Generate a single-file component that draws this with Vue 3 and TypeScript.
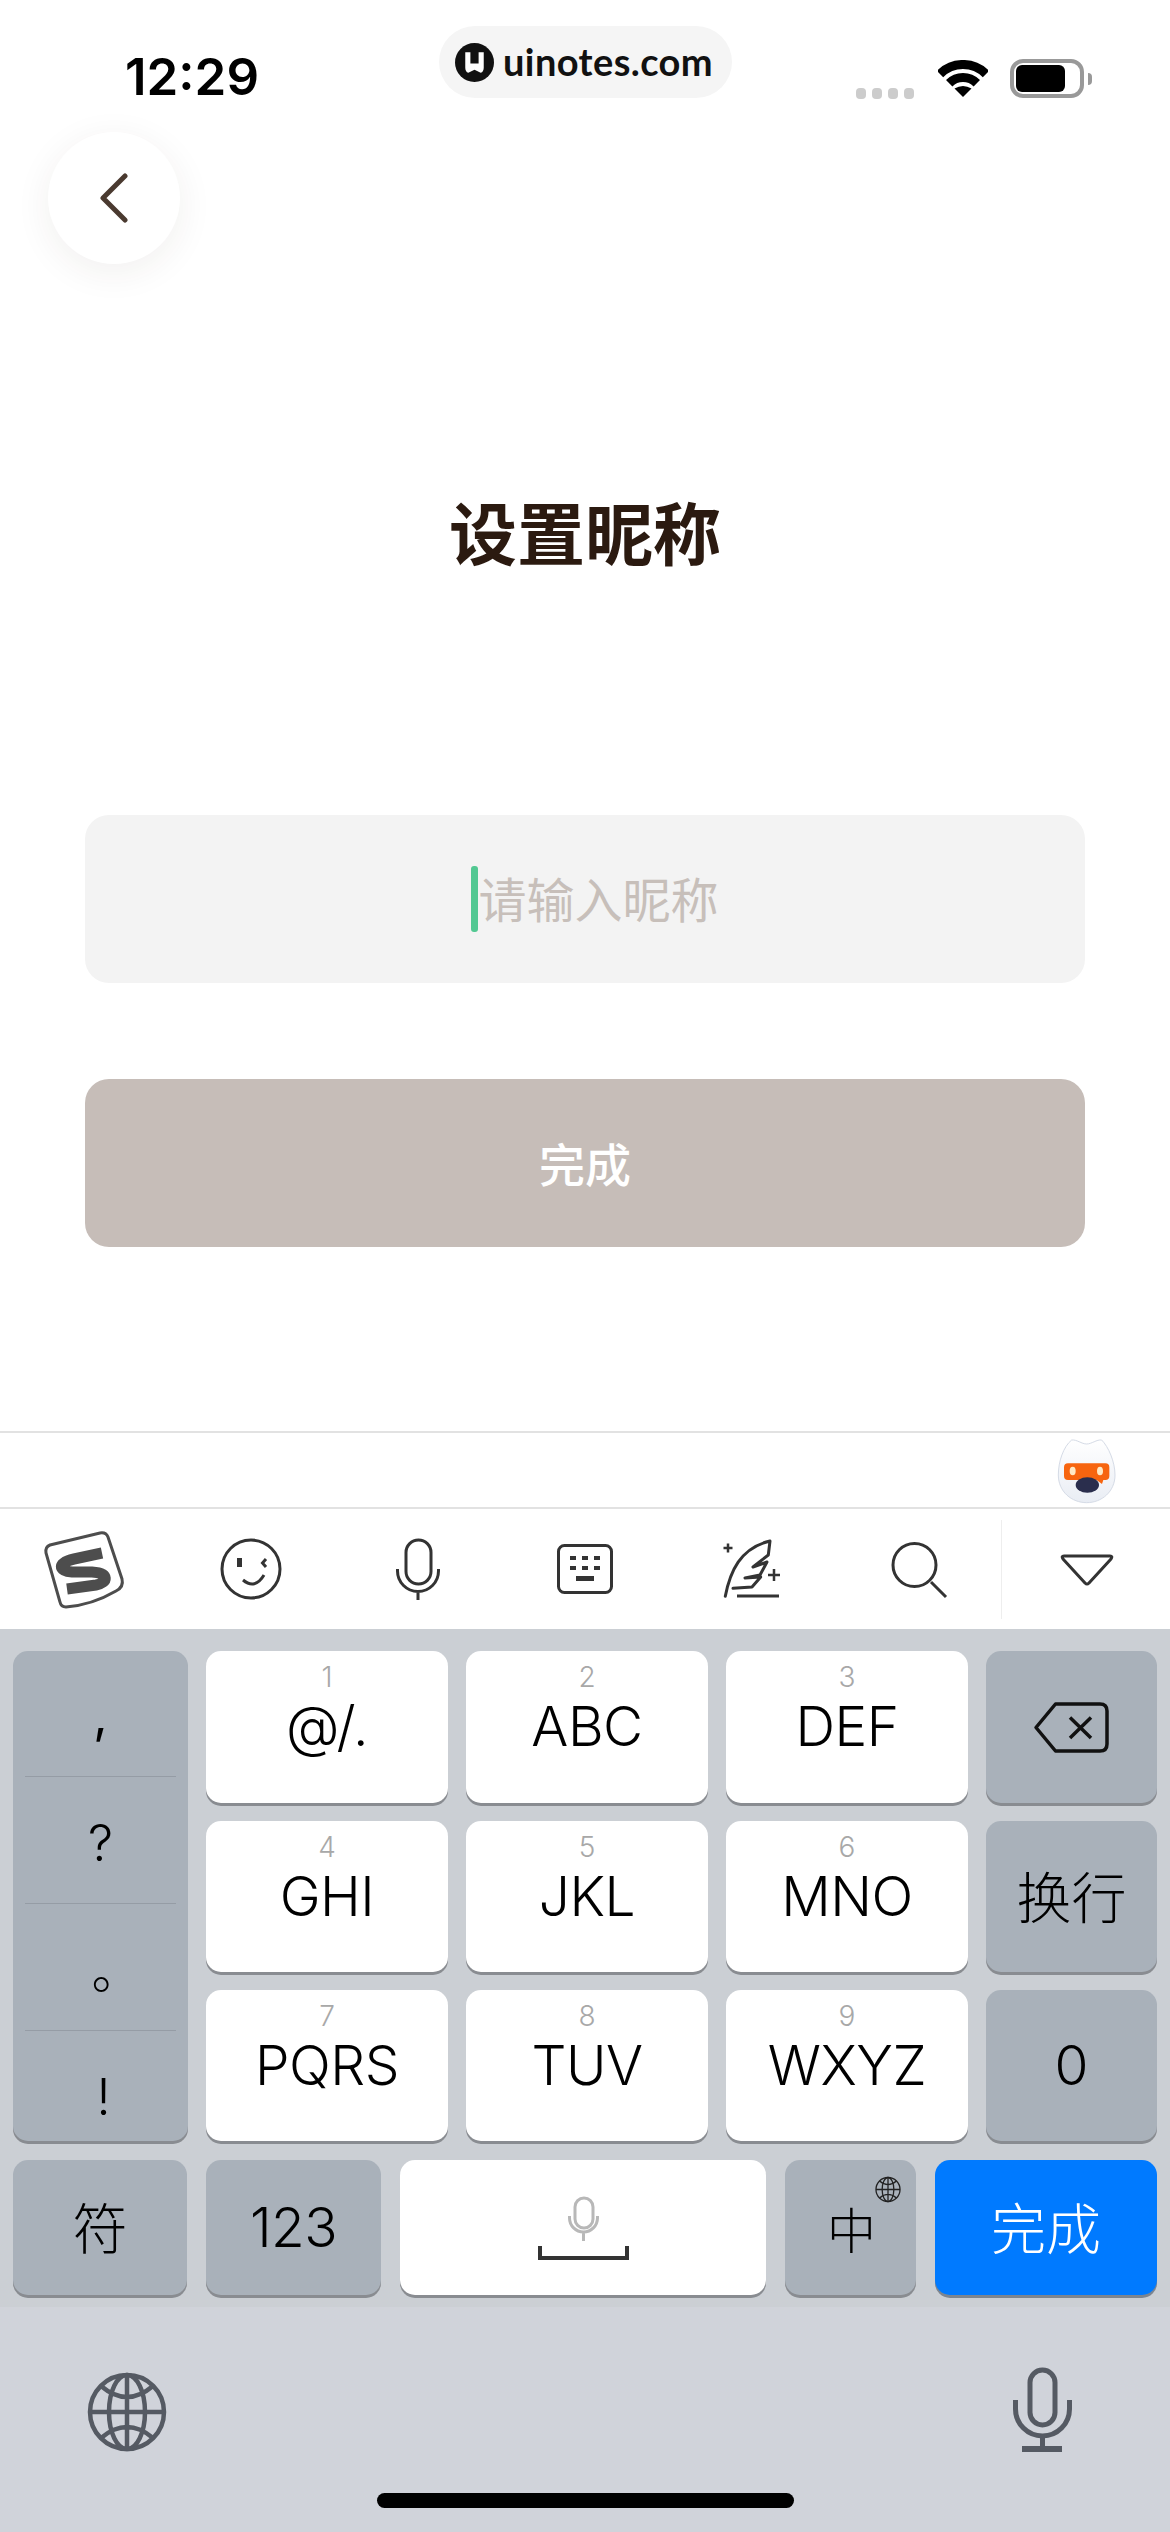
<template>
  <div class="page">
    <section class="main">
      <header class="status">
        <span class="time">12:29</span>
        <div class="pill">
          <svg class="logo" viewBox="0 0 38 38">
            <circle cx="19" cy="19" r="19" fill="#111" />
            <path d="M10 9h5v11h8V9h5v15q0 4-3 5l-6-3-6 3q-3-1-3-5z" fill="#fff" />
          </svg>
          <span class="domain">uinotes.com</span>
        </div>
        <div class="indicators">
          <div class="signal"><i></i><i></i><i></i><i></i></div>
          <svg class="wifi" viewBox="0 0 50 38">
            <g fill="none" stroke="#000" stroke-width="9">
              <path d="M2 14A32.5 32.5 0 0 1 48 14" />
              <path d="M11.2 23.2A19.5 19.5 0 0 1 38.8 23.2" />
            </g>
            <path d="M25 37l-8.5-8.5q8.5-5 17 0z" fill="#000" />
          </svg>
          <div class="battery"><div class="level"></div></div>
          <div class="nub"></div>
        </div>
      </header>

      <button class="back" type="button" aria-label="返回">
        <svg width="28" height="50" viewBox="0 0 28 50">
          <path d="M25 3L3 25l22 22" fill="none" stroke="#4a3a30" stroke-width="5" stroke-linecap="round" stroke-linejoin="round" />
        </svg>
      </button>

      <h1 class="title">设置昵称</h1>

      <div class="field">
        <span class="caret"></span>
        <span class="placeholder">请输入昵称</span>
      </div>
      <button class="submit" type="button">完成</button>
    </section>

    <div class="candidates">
      <svg class="mascot" viewBox="0 0 270 240">
        <defs>
          <linearGradient id="head" x1="0" y1="0" x2="0" y2="1">
            <stop offset="0" stop-color="#ffffff" />
            <stop offset="1" stop-color="#e9edf4" />
          </linearGradient>
        </defs>
        <path d="M140 42C125 42 110 28 95 30C70 50 55 95 55 135C55 185 95 218 140 218C185 218 225 185 225 135C225 95 205 50 185 30C170 28 155 42 140 42Z" fill="url(#head)" stroke="#d5dbe6" stroke-width="3" />
        <path d="M84 100H196Q208 100 208 112V138Q208 150 196 150H190L186 162L170 150H84Q72 150 72 138V112Q72 100 84 100Z" fill="#f7650f" />
        <ellipse cx="98" cy="123" rx="9" ry="13" fill="#ffe9c4" />
        <ellipse cx="180" cy="123" rx="9" ry="13" fill="#ffe9c4" />
        <ellipse cx="142" cy="165" rx="35" ry="23" fill="#2a2e4d" />
      </svg>
    </div>

    <div class="toolbar">
      <svg class="s-logo" viewBox="40 1525 88 87">
        <path d="M50 1544L100 1532Q106 1531 108 1536L122 1578Q124 1586 116 1590Q92 1604 66 1606Q61 1606 60 1601L46 1552Q45 1546 50 1544Z" fill="none" stroke="#4d4d4d" stroke-width="3" />
        <path d="M102 1552L74 1558C57 1562 58 1570 72 1571L92 1571C110 1572 108 1582 96 1584L67 1588" fill="none" stroke="#4d4d4d" stroke-width="11" />
      </svg>
      <svg class="tool smile" viewBox="220 1537 64 64">
        <circle cx="251" cy="1569" r="29" fill="none" stroke="#333" stroke-width="3" />
        <rect x="237" y="1558" width="5" height="9" fill="#333" />
        <path d="M266 1559l-3.500 4 3.500 4M243 1580Q255 1590 264 1575" fill="none" stroke="#333" stroke-width="3" />
      </svg>
      <svg class="tool mic" viewBox="394 1537 48 64">
        <rect x="406" y="1540" width="25" height="44" rx="12.500" fill="none" stroke="#333" stroke-width="3" />
        <path d="M397.500 1569V1571A20.500 20.500 0 0 0 438.500 1571V1569M418 1591V1600" fill="none" stroke="#333" stroke-width="3" />
      </svg>
      <svg class="tool keys-icon" viewBox="555 1542 60 54">
        <rect x="558.500" y="1545.500" width="53" height="47" rx="6" fill="none" stroke="#333" stroke-width="3" />
        <path d="M570 1556h6v4h-6zM582 1556h6v4h-6zM594 1556h6v4h-6zM570 1566h6v4h-6zM582 1566h6v4h-6zM594 1566h6v4h-6zM576 1576h18v5h-18z" fill="#333" />
      </svg>
      <svg class="tool feather" viewBox="720 1539 62 60">
        <path d="M725.300 1596.300C730 1572 740 1548 770 1541L768.300 1555L753 1567L767 1562L760 1575L745 1578L760.700 1577L752 1587L733 1588.300" fill="none" stroke="#333" stroke-width="3" stroke-linejoin="round" stroke-linecap="round" />
        <path d="M737 1596H779" stroke="#333" stroke-width="3" />
        <path d="M728 1543.500V1552.500M723.500 1548H732.500M774 1569V1581M768 1575H780" stroke="#333" stroke-width="2.500" />
      </svg>
      <svg class="tool search" viewBox="890 1539 58 59">
        <circle cx="914.500" cy="1564" r="21.500" fill="none" stroke="#333" stroke-width="3" />
        <path d="M931 1581L946 1596" stroke="#333" stroke-width="3" />
      </svg>
      <div class="tool-divider"></div>
      <svg class="tool collapse" viewBox="1059 1552 56 35">
        <path d="M1064 1556H1110Q1113 1556 1111 1559L1089 1583Q1087 1585 1085 1583L1063 1559Q1061 1556 1064 1556Z" fill="none" stroke="#333" stroke-width="3" stroke-linejoin="round" />
      </svg>
    </div>

    <div class="keyboard">
      <div class="keys">
        <div class="grid">
          <div class="key gray punct">
            <span v-for="p in punctuation" :key="p.text" class="punct-cell" :class="p.cls">{{ p.text }}</span>
          </div>
          <template v-for="row in rows" :key="row.side">
            <div v-for="k in row.keys" :key="k.digit" class="key letter">
              <span class="digit">{{ k.digit }}</span>
              <span class="label">{{ k.label }}</span>
            </div>
            <div class="key gray side">
              <svg v-if="row.side === 'del'" class="del" viewBox="1032 1701 77 53">
                <path d="M1054.500 1704H1099Q1106 1704 1106 1711V1744Q1106 1751 1099 1751H1054.500L1035 1727.500Z" fill="none" stroke="#111" stroke-width="3.500" stroke-linejoin="round" />
                <path d="M1069 1717.500L1090 1738M1090 1717.500L1069 1738" stroke="#111" stroke-width="3.500" />
              </svg>
              <span v-else class="side-text" :class="{ zero: row.side === '0' }">{{ row.side }}</span>
            </div>
          </template>
        </div>

        <div class="bottom-row">
          <div class="key gray sym"><span class="cjk">符</span></div>
          <div class="key gray num"><span class="label">123</span></div>
          <div class="key letter space">
            <svg class="space-icon" viewBox="535 2195 95 67">
              <rect x="574" y="2198" width="18" height="30" rx="9" fill="none" stroke="#b8b8b8" stroke-width="3" />
              <path d="M568.500 2216V2218A14 14 0 0 0 596.500 2218V2216M582.500 2232V2241" fill="none" stroke="#b8b8b8" stroke-width="3" />
              <path d="M539 2246V2258H626V2246" fill="none" stroke="#333" stroke-width="4" />
            </svg>
          </div>
          <div class="key gray lang">
            <span class="cjk zh">中</span>
            <svg class="mini-globe" viewBox="0 0 80 80">
              <g fill="none" stroke="#222" stroke-width="4">
                <circle cx="40" cy="40" r="37" />
                <ellipse cx="40" cy="40" rx="18" ry="37" />
                <path d="M40 3V77M3 40H77M14 14Q40 36 66 14M14 66Q40 44 66 66" />
              </g>
            </svg>
          </div>
          <div class="key done"><span class="cjk">完成</span></div>
        </div>
      </div>

      <div class="dock">
        <svg class="dock-globe" viewBox="0 0 80 80">
          <g fill="none" stroke="#555a63" stroke-width="4.500">
            <circle cx="40" cy="40" r="37" />
            <ellipse cx="40" cy="40" rx="18" ry="37" />
            <path d="M40 3V77M3 40H77M14 14Q40 36 66 14M14 66Q40 44 66 66" />
          </g>
        </svg>
        <svg class="dock-mic" viewBox="1011 2365 61 88">
          <rect x="1030" y="2369" width="25" height="55" rx="12.500" fill="none" stroke="#555a63" stroke-width="5" />
          <path d="M1015.500 2399V2408A27 27 0 0 0 1069.500 2408V2399M1042.500 2436V2446" fill="none" stroke="#555a63" stroke-width="5" />
          <path d="M1022 2445H1062V2451H1022Z" fill="#555a63" />
        </svg>
        <div class="home-bar"></div>
      </div>
    </div>
  </div>
</template>

<script setup lang="ts">
interface LetterKey {
  digit: string
  label: string
}

const punctuation = [
  { text: ',', cls: 'c1' },
  { text: '?', cls: 'c2' },
  { text: '。', cls: 'c3' },
  { text: '!', cls: 'c4' },
]

const rows: { side: string; keys: LetterKey[] }[] = [
  {
    side: 'del',
    keys: [
      { digit: '1', label: '@/.' },
      { digit: '2', label: 'ABC' },
      { digit: '3', label: 'DEF' },
    ],
  },
  {
    side: '换行',
    keys: [
      { digit: '4', label: 'GHI' },
      { digit: '5', label: 'JKL' },
      { digit: '6', label: 'MNO' },
    ],
  },
  {
    side: '0',
    keys: [
      { digit: '7', label: 'PQRS' },
      { digit: '8', label: 'TUV' },
      { digit: '9', label: 'WXYZ' },
    ],
  },
]
</script>

<style>
html,
body {
  margin: 0;
  background: #fff;
}
</style>

<style scoped>
.page {
  width: 1170px;
  height: 2532px;
  display: flex;
  flex-direction: column;
  background: #fff;
  overflow: hidden;
  font-family: Inter, "Noto Sans CJK SC", sans-serif;
}

.main {
  height: 1431px;
  display: flex;
  flex-direction: column;
  flex-shrink: 0;
}

.status {
  height: 98px;
  padding: 26px 0 0 125px;
  box-sizing: border-box;
  display: flex;
  align-items: flex-end;
}
.time {
  width: 314px;
  font-size: 51px;
  line-height: 50px;
  font-weight: 600;
  color: #000;
  margin-bottom: -4px;
}
.pill {
  width: 293px;
  height: 72px;
  border-radius: 36px;
  background: #f5f5f5;
  display: flex;
  align-items: center;
  padding-left: 16px;
  box-sizing: border-box;
  gap: 9px;
  font-family: Lato, sans-serif;
  font-size: 38px;
  font-weight: 700;
  color: #111;
  letter-spacing: 0.4px;
}
.domain {
  margin-top: -2px;
}
.logo {
  width: 39px;
  height: 39px;
  flex-shrink: 0;
}
.indicators {
  margin-left: 124px;
  display: flex;
  align-items: flex-end;
}
.signal {
  display: flex;
  gap: 6px;
  margin-right: 24px;
  margin-bottom: -1px;
}
.signal i {
  width: 10px;
  height: 11px;
  border-radius: 4px;
  background: #ccc;
}
.wifi {
  width: 50px;
  height: 38px;
  margin-right: 22px;
}
.battery {
  width: 74px;
  height: 39px;
  border: 4px solid #999;
  border-radius: 13px;
  box-sizing: border-box;
  padding: 2px;
}
.level {
  width: 49px;
  height: 27px;
  background: #000;
  border-radius: 6px;
}
.nub {
  width: 4px;
  height: 12px;
  margin: 0 0 13px 4px;
  background: #999;
  border-radius: 0 6px 6px 0;
}

.back {
  width: 132px;
  height: 132px;
  margin: 34px 0 0 48px;
  padding: 0;
  border: 0;
  border-radius: 50%;
  background: #fff;
  box-shadow: 0 8px 36px rgba(60, 40, 30, 0.07);
  display: flex;
  align-items: center;
  justify-content: center;
}

.title {
  margin: 233px 0 0;
  height: 68px;
  font-size: 68px;
  line-height: 68px;
  font-weight: 700;
  color: #2b1a10;
  text-align: center;
  font-family: "Noto Sans CJK SC", sans-serif;
}

.field {
  margin: 250px 85px 0;
  height: 168px;
  border-radius: 24px;
  background: #f3f3f3;
  display: flex;
  align-items: center;
  justify-content: center;
  padding-left: 20px;
}
.caret {
  width: 7px;
  height: 66px;
  border-radius: 3px;
  background: #52c892;
  flex-shrink: 0;
}
.placeholder {
  font-family: "Noto Sans CJK SC", sans-serif;
  font-size: 48px;
  line-height: 66px;
  color: #c7bfba;
  padding-bottom: 5px;
}

.submit {
  margin: 96px 85px 0;
  height: 168px;
  border: 0;
  border-radius: 24px;
  background: #c6bdb8;
  color: #fff;
  font-family: "Noto Sans CJK SC", sans-serif;
  font-size: 46px;
  font-weight: 500;
  padding: 0 0 3px;
}

.candidates {
  height: 78px;
  box-sizing: border-box;
  border-top: 2px solid #e2e2e2;
  border-bottom: 2px solid #e2e2e2;
  display: flex;
  justify-content: flex-end;
  padding-right: 40px;
  flex-shrink: 0;
  overflow: hidden;
}
.mascot {
  width: 90px;
  height: 80px;
  margin-top: -3px;
}

.toolbar {
  height: 120px;
  display: flex;
  align-items: center;
  flex-shrink: 0;
  background: #fff;
}
.s-logo {
  width: 88px;
  height: 87px;
  margin-left: 40px;
  margin-top: 1px;
}
.tool {
  flex-shrink: 0;
}
.smile {
  width: 64px;
  height: 64px;
  margin-left: 92px;
}
.mic {
  width: 48px;
  height: 64px;
  margin-left: 110px;
}
.keys-icon {
  width: 60px;
  height: 54px;
  margin-left: 113px;
}
.feather {
  width: 62px;
  height: 60px;
  margin-left: 105px;
}
.search {
  width: 58px;
  height: 59px;
  margin-left: 108px;
}
.tool-divider {
  width: 1px;
  height: 99px;
  margin-left: 53px;
  background: #eee;
  flex-shrink: 0;
}
.collapse {
  width: 56px;
  height: 35px;
  margin-left: 57px;
}

.keyboard {
  flex: 1;
  display: flex;
  flex-direction: column;
  background: #d0d3da;
}
.keys {
  height: 678px;
  box-sizing: border-box;
  padding: 22px 13px 0;
  background: #cbcfd4;
}
.grid {
  display: grid;
  grid-template-columns: 175px 242px 242px 242px 171px;
  grid-template-rows: 152px 151px 151px;
  gap: 18px;
}
.key {
  border-radius: 15px;
  display: flex;
  flex-direction: column;
  align-items: center;
  justify-content: center;
  box-shadow: 0 3px 0 #898c91;
  color: #000;
}
.letter {
  background: #fff;
}
.gray {
  background: #a9b1ba;
}
.grid .letter {
  justify-content: flex-start;
  padding-top: 12px;
  box-sizing: border-box;
}
.digit {
  font-size: 28px;
  line-height: 28px;
  font-weight: 300;
  color: #a8a8a8;
}
.label {
  margin-top: 7px;
  font-size: 55px;
  line-height: 56px;
  font-weight: 300;
  letter-spacing: -0.5px;
}

.punct {
  grid-row: 1 / span 3;
  justify-content: flex-start;
  padding: 0 12px;
  box-sizing: border-box;
}
.punct-cell {
  width: 100%;
  display: flex;
  align-items: center;
  justify-content: center;
  font-size: 50px;
  font-weight: 300;
  box-sizing: border-box;
}
.c1 {
  height: 126px;
  padding-top: 2px;
  font-weight: 400;
  border-bottom: 1px solid #959ca5;
}
.c2 {
  height: 127px;
  padding-top: 6px;
  border-bottom: 1px solid #959ca5;
}
.c3 {
  height: 127px;
  padding: 0 0 0 32px;
  font-family: "Noto Sans CJK SC", sans-serif;
  border-bottom: 1px solid #959ca5;
}
.c4 {
  height: 110px;
  padding: 22px 0 0 6px;
}

.side-text {
  font-family: "Noto Sans CJK SC", sans-serif;
  font-size: 55px;
  font-weight: 300;
  padding-bottom: 5px;
}
.side-text.zero {
  font-family: Inter, sans-serif;
  padding-bottom: 2px;
}
.del {
  width: 77px;
  height: 53px;
}

.bottom-row {
  margin-top: 19px;
  height: 135px;
  display: flex;
  gap: 19px;
}
.cjk {
  font-family: "Noto Sans CJK SC", sans-serif;
  font-size: 55px;
  font-weight: 300;
  padding-bottom: 5px;
}
.sym {
  width: 174px;
}
.num {
  width: 175px;
}
.num .label {
  margin-top: 0;
  padding-bottom: 2px;
}
.space {
  width: 366px;
}
.space-icon {
  width: 95px;
  height: 67px;
  margin-top: 1px;
}
.lang {
  width: 131px;
  position: relative;
}
.zh {
  font-size: 49px;
  margin: 0 -2px 0 0;
  padding: 0;
}
.mini-globe {
  position: absolute;
  top: 16px;
  right: 15px;
  width: 26px;
  height: 27px;
}
.done {
  width: 222px;
  background: #007aff;
  box-shadow: 0 3px 0 #7c8590;
}
.done .cjk {
  color: #fff;
}

.dock {
  flex: 1;
  position: relative;
  display: flex;
  justify-content: space-between;
  align-items: flex-start;
  padding: 65px 98px 0 87px;
}
.dock-globe {
  width: 80px;
  height: 80px;
}
.dock-mic {
  width: 61px;
  height: 88px;
  margin-top: -6px;
}
.home-bar {
  position: absolute;
  left: 377px;
  bottom: 24px;
  width: 417px;
  height: 15px;
  border-radius: 8px;
  background: #000;
}
</style>
